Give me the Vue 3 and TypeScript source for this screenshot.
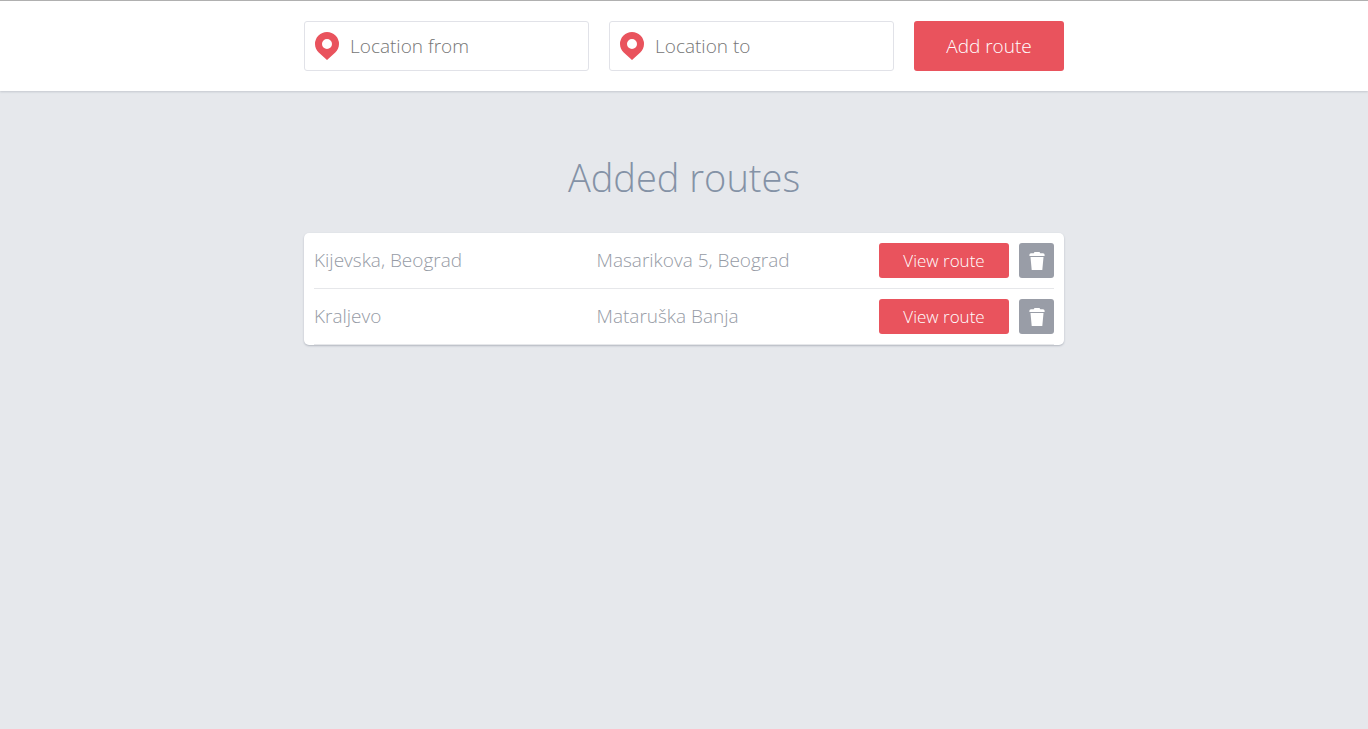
<script setup lang="ts">
import { ref } from 'vue'

interface Route {
  id: number
  from: string
  to: string
}

const from = ref('')
const to = ref('')
const routes = ref<Route[]>([
  { id: 1, from: 'Kijevska, Beograd', to: 'Masarikova 5, Beograd' },
  { id: 2, from: 'Kraljevo', to: 'Mataruška Banja' },
])

function addRoute(): void {
  if (!from.value.trim() || !to.value.trim()) return
  routes.value.push({ id: Date.now(), from: from.value, to: to.value })
  from.value = ''
  to.value = ''
}

function removeRoute(id: number): void {
  routes.value = routes.value.filter((route) => route.id !== id)
}
</script>

<template>
  <div class="page">
    <header class="bar">
      <form class="container search" @submit.prevent="addRoute">
        <label class="field">
          <svg class="pin" viewBox="0 0 24 28" aria-hidden="true">
            <path
              fill-rule="evenodd"
              d="M12 0a12 12 0 0 1 12 12c0 3.400-1.500 6.200-3.700 8.400L12 28l-8.300-7.600C1.500 18.200 0 15.400 0 12A12 12 0 0 1 12 0zm0 7a5 5 0 1 0 0 10 5 5 0 0 0 0-10z"
            />
          </svg>
          <input v-model="from" type="text" placeholder="Location from" aria-label="Location from" />
        </label>
        <label class="field">
          <svg class="pin" viewBox="0 0 24 28" aria-hidden="true">
            <path
              fill-rule="evenodd"
              d="M12 0a12 12 0 0 1 12 12c0 3.400-1.500 6.200-3.700 8.400L12 28l-8.300-7.600C1.500 18.200 0 15.400 0 12A12 12 0 0 1 12 0zm0 7a5 5 0 1 0 0 10 5 5 0 0 0 0-10z"
            />
          </svg>
          <input v-model="to" type="text" placeholder="Location to" aria-label="Location to" />
        </label>
        <button class="add" type="submit">Add route</button>
      </form>
    </header>
    <main class="container">
      <h1>Added routes</h1>
      <ul class="card">
        <li v-for="route in routes" :key="route.id" class="row">
          <span class="place">{{ route.from }}</span>
          <span class="place">{{ route.to }}</span>
          <div class="actions">
            <button class="view" type="button">View route</button>
            <button class="remove" type="button" aria-label="Delete route" @click="removeRoute(route.id)">
              <svg class="trash" viewBox="0 0 17 19" aria-hidden="true">
                <path d="M6.500 1h5l.8 1.200h2.700a1.600 1.600 0 0 1 1.600 1.600V5H1.400V3.800A1.600 1.600 0 0 1 3 2.200h2.700z" />
                <path d="M2.500 6h13l-1.200 13H3.700z" />
              </svg>
            </button>
          </div>
        </li>
      </ul>
    </main>
  </div>
</template>

<style>
body {
  margin: 0;
  background: #e6e8ec;
}
</style>

<style scoped>
.page {
  min-height: 100vh;
  background: #e6e8ec;
  font-family: "Open Sans", "Noto Sans", sans-serif;
  font-weight: 300;
  font-size: 19px;
}

.page,
.page * {
  box-sizing: border-box;
}

.container {
  width: 100%;
  max-width: 760px;
  margin: 0 auto;
}

.bar {
  padding: 20px 0;
  border-top: 1px solid #b0b0b0;
  background: #fff;
  box-shadow: 0 1px 2px rgba(60, 70, 90, 0.2);
}

.search {
  display: flex;
  gap: 20px;
}

.field {
  display: flex;
  flex: 1;
  align-items: center;
  gap: 11px;
  min-width: 0;
  height: 50px;
  padding: 0 10px;
  border: 1px solid #e1e2e8;
  border-radius: 3px;
}

.pin {
  flex: none;
  width: 24px;
  height: 28px;
  fill: #e9535d;
}

input {
  flex: 1;
  min-width: 0;
  height: 48px;
  padding: 0;
  border: 0;
  outline: 0;
  background: transparent;
  color: #555;
  font: inherit;
}

input::placeholder {
  color: #757575;
  opacity: 1;
}

button {
  padding: 0;
  border: 0;
  border-radius: 3px;
  background: #e9535d;
  color: #fff;
  font: inherit;
  cursor: pointer;
}

.add {
  width: 150px;
  height: 50px;
}

h1 {
  margin: 60px 0 30px;
  color: #8492a6;
  font-size: 38px;
  font-weight: 300;
  line-height: 52px;
  text-align: center;
}

.card {
  margin: 0;
  padding: 0 10px;
  border-radius: 5px;
  background: #fff;
  box-shadow: 0 1px 2px rgba(60, 70, 90, 0.3);
  list-style: none;
}

.row {
  display: flex;
  align-items: center;
  padding: 10px 0;
  border-bottom: 1px solid #e6e7ea;
}

.place {
  flex: 1;
  min-width: 0;
  color: #969ba5;
  line-height: 35px;
}

.actions {
  display: flex;
  gap: 10px;
}

.view {
  width: 130px;
  height: 35px;
  font-size: 17px;
}

.remove {
  display: flex;
  align-items: center;
  justify-content: center;
  width: 35px;
  height: 35px;
  background: #999da7;
}

.trash {
  width: 17px;
  height: 19px;
  fill: #fff;
}
</style>
